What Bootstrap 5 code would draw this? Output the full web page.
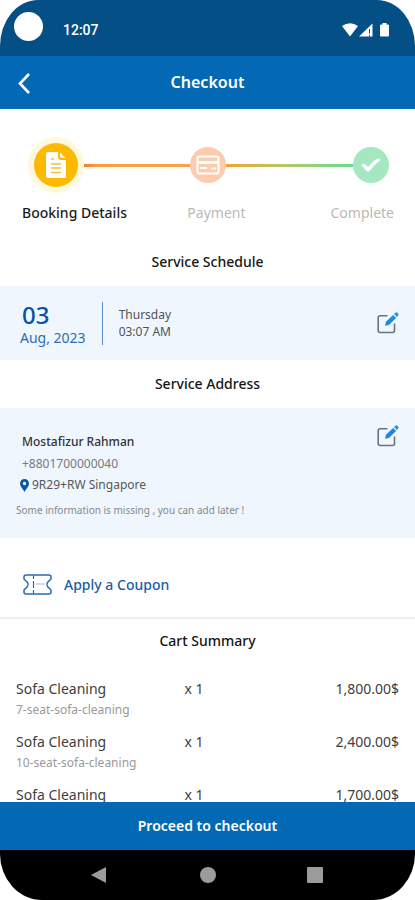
<!DOCTYPE html>
<html lang="en">
<head>
<meta charset="utf-8">
<meta name="viewport" content="width=device-width, initial-scale=1">
<title>Checkout</title>
<link href="https://cdn.jsdelivr.net/npm/bootstrap@5.3.0/dist/css/bootstrap.min.css" rel="stylesheet">
<style>
  body { font-family: "Noto Sans", "Open Sans", sans-serif; color: #222; background: #fff; font-size: 13px; line-height: 20px; }
  svg { display: block; flex: none; }
  .status-bar { height: 56px; background: #034f86; border-radius: 38px 38px 0 0 / 46px 46px 0 0; padding: 0 25px 0 14px; font: 500 14px/20px Roboto, sans-serif; }
  .camera { width: 29px; height: 29px; margin-top: -4px; }
  .app-bar { height: 53px; background: #0469b4; display: grid; grid-template-columns: 48px 1fr 48px; }
  .bar-title { font-size: 16px; font-weight: 600; }
  .steps { padding: 28px 26px 0 28px; }
  .step-dot { width: 36px; height: 36px; }
  .step-now { width: 56px; height: 56px; background: #fff8dc; }
  .step-now > span { width: 44px; height: 44px; background: #fcb900; }
  .pay-dot { background: #fdcbae; }
  .done-dot { background: #a4e7c1; }
  .track { height: 3px; }
  .track-a { flex: 106 1 0; background: linear-gradient(90deg, #f47b3c, #fb9f38 12%, #f9a440); }
  .track-b { flex: 126 1 0; background: linear-gradient(90deg, #f3a32c, #b9c56a 45%, #5fe08f); }
  .step-names { display: grid; grid-template-columns: 4fr 2fr 3fr; padding: 10px 21px 0 22px; font-size: 14px; color: #b9b9b9; }
  .step-names .active { color: #1c1c1c; font-weight: 500; }
  .section-title { font-size: 14px; font-weight: 500; line-height: 20px; color: #151515; margin: 0; padding: 14px 0; text-align: center; }
  .section-title.first { padding-top: 29px; }
  .section-title.cart { padding: 12px 0; }
  .band { background: #f0f6fd; }
  .schedule { height: 74px; padding: 0 15px 0 20px; }
  .day { font-size: 24px; line-height: 26px; font-weight: 500; color: #0b51a5; padding-left: 2px; }
  .month { font-size: 14px; line-height: 20px; color: #2f6cb4; }
  .rule { width: 1px; height: 43px; background: #5b8fcb; }
  .when { font-size: 12px; line-height: 17px; color: #505356; }
  .address { height: 130px; padding: 16px 15px 0 16px; }
  .who { padding: 8px 0 0 6px; }
  .who-name { font-size: 12px; font-weight: 500; color: #303338; }
  .phone { font-size: 12px; line-height: 24px; color: #75797e; }
  .place { font-size: 12px; line-height: 18px; color: #55585c; margin-left: -2px; gap: 3px; }
  .hint { font-size: 10px; line-height: 16px; color: #85888c; margin-top: 8px; }
  .coupon { height: 81px; border: 0; border-bottom: 2px solid #eeeff0; background: none; padding: 14px 23px 0; gap: 12px; font-size: 14px; font-weight: 500; color: #1b5ca9; }
  .items { color: #404040; }
  .items table { width: 100%; table-layout: fixed; }
  .items td { padding: 0; vertical-align: top; height: 53px; font-size: 14px; line-height: 20px; }
  .items .c-name { width: 44%; }
  .kind { font-size: 12px; color: #999; line-height: 22px; }
  .proceed { height: 48px; background: #0469b4; font-size: 14px; font-weight: 600; border: 0; border-radius: 0; }
  .sys-nav { height: 50px; background: #000; border-radius: 0 0 42px 42px / 0 0 46px 46px; padding: 0 80px; }
</style>
<script src="https://cdn.jsdelivr.net/npm/bootstrap@5.3.0/dist/js/bootstrap.bundle.min.js"></script>
</head>
<body>
<svg width="0" height="0" class="position-absolute" aria-hidden="true">
  <symbol id="edit" viewBox="0 0 24 24">
    <path d="M11.500 4.700H4.200Q2.200 4.700 2.200 6.700V19.500Q2.200 21.500 4.200 21.500H16.500Q18.500 21.500 18.500 19.500V12.500" fill="none" stroke="#66747f" stroke-width="1.600"/>
    <path d="M9 14.800 10 10.800 17.100 3.900 20.100 6.900 12.900 13.900Z" fill="#1e88dc"/>
    <path d="M18 3 19.300 1.700Q20.400.8 21.600 1.900L22.200 2.500Q23 3.600 22.100 4.700L20.900 5.900Z" fill="#2b92e4"/>
  </symbol>
</svg>
<div class="d-flex flex-column vh-100 overflow-hidden">
  <div class="status-bar d-flex align-items-center text-white flex-shrink-0">
    <span class="camera rounded-circle bg-white"></span>
    <span class="ms-3 ps-1 pt-1">12:07</span>
    <svg class="ms-auto mt-1" width="48" height="16" viewBox="0 0 48 16" fill="#fff" aria-hidden="true">
      <path d="M0 4Q8-1.500 16 4L8 14.500Z"/>
      <path d="M30.500 1.500V14.500H17Z"/><path d="M27.500 7V11.500M27.500 12.800V14.500" stroke="#034f86" stroke-width="1"/>
      <path d="M40.500 1H44.500V2.500H46Q47 2.500 47 3.500V13.500Q47 14.500 46 14.500H39Q38 14.500 38 13.500V3.500Q38 2.500 39 2.500H40.500Z"/>
    </svg>
  </div>
  <header class="app-bar align-items-center text-white flex-shrink-0">
    <button class="btn p-0 border-0 text-white d-flex justify-content-center" aria-label="Back">
      <svg width="16" height="24" viewBox="0 0 16 24"><path d="M13 3 4 12.500 13 22" fill="none" stroke="currentColor" stroke-width="2.600"/></svg>
    </button>
    <h1 class="bar-title m-0 text-center">Checkout</h1>
  </header>

  <main class="flex-grow-1 overflow-hidden">
    <div class="steps d-flex align-items-center">
      <span class="step-now rounded-circle d-flex align-items-center justify-content-center flex-shrink-0">
        <span class="rounded-circle d-flex align-items-center justify-content-center">
          <svg width="22" height="28" viewBox="0 0 22 28" aria-hidden="true">
            <path d="M1 3Q1 1 3 1H13V6Q13 9 16 9H21V26Q21 27 20 27H3Q1 27 1 25Z" fill="#fff"/>
            <path d="M15 1.500 20.500 7H17Q15 7 15 5Z" fill="#fff"/>
            <path d="M6 8H9M6 13H16M6 17H16M6 21.500H16" stroke="#f8bd3b" stroke-width="1.700"/>
          </svg>
        </span>
      </span>
      <span class="track track-a"></span>
      <span class="step-dot pay-dot rounded-circle d-flex align-items-center justify-content-center flex-shrink-0">
        <svg width="24" height="20" viewBox="0 0 24 20" aria-hidden="true"><rect x="1.500" y="1.500" width="21" height="17" rx="2" fill="none" stroke="#fff" stroke-width="2"/><path d="M2 7.500H22" stroke="#fff" stroke-width="3"/><path d="M4 13H11M15 13.500H20" stroke="#fff" stroke-width="1.800"/></svg>
      </span>
      <span class="track track-b"></span>
      <span class="step-dot done-dot rounded-circle d-flex align-items-center justify-content-center flex-shrink-0">
        <svg width="22" height="16" viewBox="0 0 22 16" aria-hidden="true"><path d="M1.500 8.500Q3 5.500 5.500 7.500L8 10Q13 3.500 18 1.500Q21 1 20 3.500Q14 8 9.500 14Q8 15.500 6.500 14Z" fill="#fff"/></svg>
      </span>
    </div>
    <div class="step-names">
      <span class="active">Booking Details</span><span>Payment</span><span class="text-end">Complete</span>
    </div>

    <h2 class="section-title first">Service Schedule</h2>
    <section class="band schedule d-flex align-items-center">
      <div class="pt-1"><div class="day">03</div><div class="month">Aug, 2023</div></div>
      <div class="rule mx-3"></div>
      <div class="when">Thursday<br>03:07 AM</div>
      <button class="btn p-0 border-0 ms-auto" aria-label="Edit schedule"><svg width="24" height="24"><use href="#edit"/></svg></button>
    </section>

    <h2 class="section-title">Service Address</h2>
    <section class="band address d-flex align-items-start justify-content-between">
      <div>
        <div class="who">
          <div class="who-name">Mostafizur Rahman</div>
          <div class="phone">+8801700000040</div>
          <div class="place d-flex align-items-center">
            <svg width="9" height="13" viewBox="0 0 9 13" aria-hidden="true"><path fill-rule="evenodd" d="M4.500 0A4.500 4.500 0 0 1 9 4.500C9 7.500 6 10 4.500 13 3 10 0 7.500 0 4.500A4.500 4.500 0 0 1 4.500 0ZM4.500 2.800A1.700 1.700 0 1 0 4.500 6.200 1.700 1.700 0 0 0 4.500 2.800Z" fill="#0b57ac"/></svg>
            9R29+RW Singapore
          </div>
        </div>
        <div class="hint">Some information is missing , you can add later !</div>
      </div>
      <button class="btn p-0 border-0" aria-label="Edit address"><svg width="24" height="24"><use href="#edit"/></svg></button>
    </section>

    <button class="coupon w-100 d-flex align-items-center">
      <svg width="29" height="21" viewBox="0 0 29 21" fill="none" stroke="#2b69b0" stroke-width="1.500" aria-hidden="true">
        <path d="M3 1H26Q28 1 28 3V5L24.500 8.500Q23 10.500 24.500 12.500L28 16V18Q28 20 26 20H3Q1 20 1 18V16L4.500 12.500Q6 10.500 4.500 8.500L1 5V3Q1 1 3 1Z"/>
        <path d="M10.500 1.500V5M10.500 7V14M10.500 16V20" stroke-width="1.200"/><path d="M13 10H22" stroke="#9dbbdc" stroke-width="1"/>
      </svg>
      Apply a Coupon
    </button>

    <h2 class="section-title cart">Cart Summary</h2>
    <section class="items px-3 pt-3">
      <table>
        <tbody>
          <tr><td class="c-name">Sofa Cleaning<div class="kind">7-seat-sofa-cleaning</div></td><td>x 1</td><td class="text-end">1,800.00$</td></tr>
          <tr><td>Sofa Cleaning<div class="kind">10-seat-sofa-cleaning</div></td><td>x 1</td><td class="text-end">2,400.00$</td></tr>
          <tr><td>Sofa Cleaning</td><td>x 1</td><td class="text-end">1,700.00$</td></tr>
        </tbody>
      </table>
    </section>
  </main>

  <button class="proceed text-white flex-shrink-0">Proceed to checkout</button>
  <nav class="sys-nav d-flex align-items-center justify-content-between flex-shrink-0" aria-label="System">
    <button class="btn p-0 border-0" aria-label="System back"><svg width="36" height="20" viewBox="0 0 36 20"><path d="M26 2V18L11 10Z" fill="#9c9c9c"/></svg></button>
    <button class="btn p-0 border-0" aria-label="Home"><svg width="36" height="20" viewBox="0 0 36 20"><circle cx="18" cy="10" r="8" fill="#9c9c9c"/></svg></button>
    <button class="btn p-0 border-0" aria-label="Recents"><svg width="36" height="20" viewBox="0 0 36 20"><rect x="8" y="2" width="16" height="16" rx="1" fill="#9c9c9c"/></svg></button>
  </nav>
</div>
</body>
</html>
